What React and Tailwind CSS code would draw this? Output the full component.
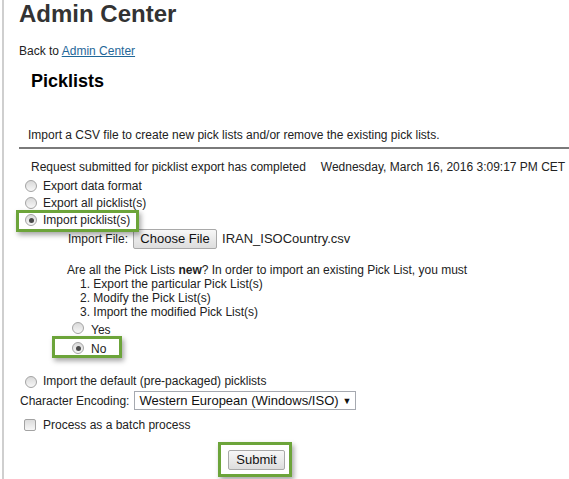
import React from "react";

// Green annotation frame drawn over a control (screenshot callout).
function Callout({ className }) {
  return (
    <span
      className={`pointer-events-none absolute border-[3px] border-[#6ca43a] shadow-[2px_3px_5px_rgba(0,0,0,0.35)] ${className}`}
    />
  );
}

function Radio({ checked = false, className = "" }) {
  return (
    <span
      className={`flex h-[12px] w-[12px] shrink-0 items-center justify-center rounded-full border border-[#a3a3a3] bg-gradient-to-b from-[#d9d9d9] to-[#f7f7f7] ${className}`}
    >
      {checked ? <span className="h-[5px] w-[5px] rounded-full bg-[#4a4a4a]" /> : null}
    </span>
  );
}

function RadioRow({ label, checked, className = "" }) {
  return (
    <div className={`flex h-[17px] items-center ${className}`}>
      <Radio checked={checked} className="ml-[6px] mt-[1px]" />
      <span className="ml-[6px] leading-[16px]">{label}</span>
    </div>
  );
}

export default function App() {
  return (
    <div className="h-[479px] w-[569px] overflow-hidden bg-white pl-[2px] font-['Liberation_Sans',Arial,sans-serif] text-[12px] text-[#222]">
      <div className="h-full border-l-2 border-[#cfcfcf] pl-[15px]">
        <h1 className="text-[24px] font-bold leading-[28px] text-[#333]">Admin Center</h1>

        <div className="mt-[15px] leading-[16px]">
          Back to{" "}
          <a href="#" className="text-[#1f6799] underline">
            Admin Center
          </a>
        </div>

        <h2 className="ml-[12px] mt-[11px] text-[18px] font-bold leading-[22px] text-black">Picklists</h2>

        <p className="ml-[9px] mt-[35px] leading-[16px]">
          Import a CSV file to create new pick lists and/or remove the existing pick lists.
        </p>

        <div className="mt-[4px] h-[2px] bg-[#7a7a7a]" />

        <div className="ml-[12px] mt-[10px] leading-[16px]">
          Request submitted for picklist export has completed
          <span className="ml-[15px]">Wednesday, March 16, 2016 3:09:17 PM CET</span>
        </div>

        <RadioRow label="Export data format" className="mt-[2px]" />
        <RadioRow label="Export all picklist(s)" />
        <div className="relative">
          <RadioRow label="Import picklist(s)" checked />
          <Callout className="-left-[3px] -top-[1px] h-[22px] w-[123px]" />
        </div>

        <div className="mt-[1px] flex h-[20px] items-center">
          <span className="ml-[49px] leading-[16px]">Import File:</span>
          <button
            type="button"
            className="ml-[5px] h-[20px] w-[84px] rounded-[2px] border border-[#a9a9a9] bg-gradient-to-b from-[#f7f7f7] to-[#dddddd] text-[13px] leading-[18px] text-[#111]"
          >
            Choose File
          </button>
          <span className="ml-[5px] text-[13px] leading-[16px]">IRAN_ISOCountry.csv</span>
        </div>

        <div className="ml-[48px] mt-[13.5px] leading-[14px]">
          Are all the Pick Lists <b>new</b>? In order to import an existing Pick List, you must
        </div>
        <ol className="ml-[61px] leading-[14px]">
          <li>1. Export the particular Pick List(s)</li>
          <li>2. Modify the Pick List(s)</li>
          <li>3. Import the modified Pick List(s)</li>
        </ol>

        <div className="mt-[1px] flex h-[20px] items-center">
          <Radio className="-mt-[3px] ml-[53px]" />
          <span className="ml-[7px] leading-[16px]">Yes</span>
        </div>
        <div className="relative flex h-[18px] items-center">
          <Radio checked className="-mt-[1px] ml-[53px]" />
          <span className="ml-[7px] leading-[16px]">No</span>
          <Callout className="left-[33px] -top-[4px] h-[22px] w-[70px]" />
        </div>

        <RadioRow label="Import the default (pre-packaged) picklists" className="mt-[15px]" />

        <div className="flex h-[22px] items-center">
          <span className="ml-[1px] leading-[16px]">Character Encoding:</span>
          <div className="ml-[5px] flex h-[19px] w-[222px] items-center justify-between border border-[#a6a9b0] bg-white pl-[4px] pr-[4px] text-[13px] leading-[16px] text-[#111]">
            <span>Western European (Windows/ISO)</span>
            <span className="text-[9px]">▼</span>
          </div>
        </div>

        <div className="mt-[4px] flex h-[18px] items-center">
          <span className="ml-[5px] h-[12px] w-[12px] shrink-0 rounded-[2px] border border-[#a3a3a3] bg-gradient-to-b from-[#dcdcdc] to-[#f7f7f7]" />
          <span className="ml-[7px] leading-[16px]">Process as a batch process</span>
        </div>

        <div className="relative ml-[209px] mt-[16px] w-[57px]">
          <button
            type="button"
            className="h-[20px] w-[57px] rounded-[2px] border border-[#a9a9a9] bg-gradient-to-b from-[#f7f7f7] to-[#dddddd] text-[13px] leading-[18px] text-[#111]"
          >
            Submit
          </button>
          <Callout className="-left-[10px] -top-[8px] h-[35px] w-[74px]" />
        </div>
      </div>
    </div>
  );
}
